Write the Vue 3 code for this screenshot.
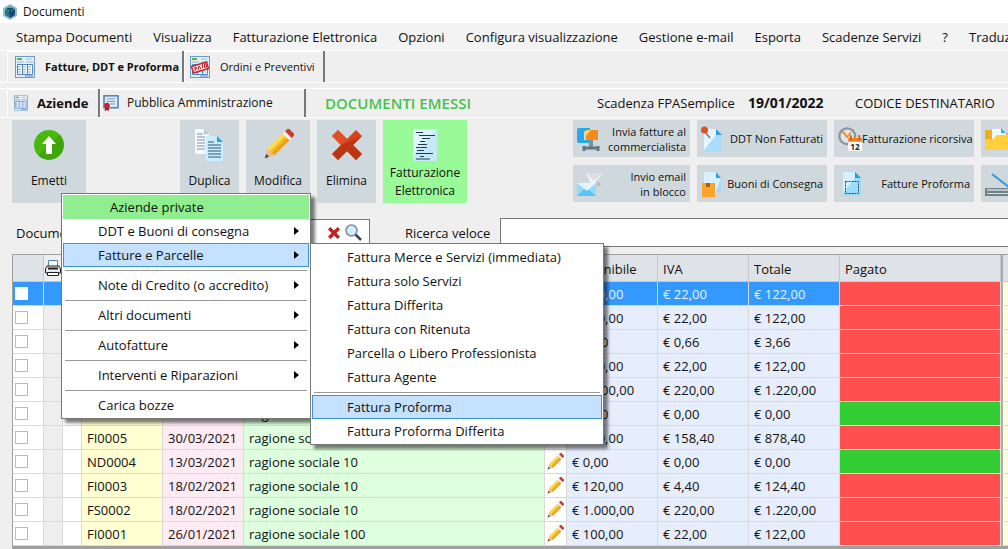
<script setup>
import { ref } from 'vue'

const menuBar = ['Stampa Documenti', 'Visualizza', 'Fatturazione Elettronica', 'Opzioni', 'Configura visualizzazione', 'Gestione e-mail', 'Esporta', 'Scadenze Servizi', '?', 'Traduzioni']

const issueMenu = [
  { label: 'DDT e Buoni di consegna', sub: true },
  { label: 'Fatture e Parcelle', sub: true, active: true },
  { sep: true },
  { label: 'Note di Credito (o accredito)', sub: true },
  { sep: true },
  { label: 'Altri documenti', sub: true },
  { sep: true },
  { label: 'Autofatture', sub: true },
  { sep: true },
  { label: 'Interventi e Riparazioni', sub: true },
  { sep: true },
  { label: 'Carica bozze' },
]

const invoiceMenu = [
  { label: 'Fattura Merce e Servizi (immediata)' },
  { label: 'Fattura solo Servizi' },
  { label: 'Fattura Differita' },
  { label: 'Fattura con Ritenuta' },
  { label: 'Parcella o Libero Professionista' },
  { label: 'Fattura Agente' },
  { sep: true },
  { label: 'Fattura Proforma', active: true },
  { label: 'Fattura Proforma Differita' },
]

const rows = ref([
  { id: 11, no: '', date: '', name: '', net: '€ 100,00', vat: '€ 22,00', total: '€ 122,00', paid: false, selected: true },
  { id: 10, no: '', date: '', name: '', net: '€ 100,00', vat: '€ 22,00', total: '€ 122,00', paid: false },
  { id: 9, no: '', date: '', name: '', net: '€ 3,00', vat: '€ 0,66', total: '€ 3,66', paid: false },
  { id: 8, no: '', date: '', name: '', net: '€ 100,00', vat: '€ 22,00', total: '€ 122,00', paid: false },
  { id: 7, no: '', date: '', name: '', net: '€ 1.000,00', vat: '€ 220,00', total: '€ 1.220,00', paid: false },
  { id: 6, no: '', date: '30/03/2021', name: 'ragione sociale 10', net: '€ 0,00', vat: '€ 0,00', total: '€ 0,00', paid: true },
  { id: 5, no: 'FI0005', date: '30/03/2021', name: 'ragione sociale 10', net: '€ 720,00', vat: '€ 158,40', total: '€ 878,40', paid: false },
  { id: 4, no: 'ND0004', date: '13/03/2021', name: 'ragione sociale 10', net: '€ 0,00', vat: '€ 0,00', total: '€ 0,00', paid: true },
  { id: 3, no: 'FI0003', date: '18/02/2021', name: 'ragione sociale 10', net: '€ 120,00', vat: '€ 4,40', total: '€ 124,40', paid: false },
  { id: 2, no: 'FS0002', date: '18/02/2021', name: 'ragione sociale 10', net: '€ 1.000,00', vat: '€ 220,00', total: '€ 1.220,00', paid: false },
  { id: 1, no: 'FI0001', date: '26/01/2021', name: 'ragione sociale 100', net: '€ 100,00', vat: '€ 22,00', total: '€ 122,00', paid: false },
])
</script>

<template>
  <div class="window">
    <svg class="defs" width="0" height="0" aria-hidden="true">
      <defs>
        <symbol id="sheet" viewBox="0 0 20 22">
          <rect x=".5" y=".5" width="19" height="21" fill="#e4eef8" stroke="#6d9bc9" />
          <path d="M2 3h5" stroke="#52b848" stroke-width="2" />
          <path d="M11 3h6M2 6h7M11 6h7" stroke="#9dbbd8" />
          <path d="M2.500 8.500h15v10h-15zM7.500 8.500v10M12.500 8.500v10" fill="#f7fbff" stroke="#5586bb" />
          <path d="M3 11h14M3 13.500h14M3 16h14" stroke="#8eb3d8" stroke-dasharray="3 2" />
          <path d="M10 20h8" stroke="#5586bb" />
        </symbol>
        <symbol id="pencil" viewBox="0 0 34 34">
          <path d="M3 31l3-10 7 7z" fill="#eebd80" />
          <path d="M3 31l1.500-4.500 3 3z" fill="#3b4048" />
          <path d="M6 21L22 5l7 7-16 16z" fill="#f8bd25" />
          <path d="M6 21L22 5l2.500 2.500L8.500 23.500z" fill="#ffdc55" />
          <path d="M10.500 25.500l16-16L29 12 13 28z" fill="#eba01c" />
          <path d="M22 5l3-3 7 7-3 3z" fill="#f0eef0" />
          <path d="M24.500 2.500L27 0q1-1 2 0l5 5q1 1 0 2l-2.500 2.500z" fill="#c73c2a" />
        </symbol>
        <symbol id="cross" viewBox="0 0 30 30">
          <path d="M6 0l9 9 9-9 6 6-9 9 9 9-6 6-9-9-9 9-6-6 9-9-9-9z" fill="#d8431c" />
          <path d="M30 6l-9 9 9 9-6 6-9-9-9 9-6-6 9-9z" fill="#bd3512" />
          <path d="M6 0L0 6l9 9 6-6z" fill="#e05024" />
        </symbol>
      </defs>
    </svg>

    <header class="title">
      <svg width="14" height="16" viewBox="0 0 14 16" aria-hidden="true">
        <path d="M7 0l7 4v8l-7 4-7-4V4z" fill="#8fc3c6" />
        <path d="M7 2l5 3v6l-5 3-5-3V5z" fill="#2c6f8f" />
        <path d="M7 2l5 3-5 3-5-3z" fill="#55b09c" />
        <path d="M7 8l5-3v6l-5 3z" fill="#174a6d" />
        <path d="M4 5h6M7 5v6" stroke="#1c4d78" stroke-width="2" />
      </svg>
      <span>Documenti</span>
    </header>

    <nav class="menubar">
      <a v-for="item in menuBar" :key="item" href="#">{{ item }}</a>
    </nav>

    <div class="tabs main-tabs" role="tablist">
      <button class="tab current" role="tab" aria-selected="true">
        <svg width="20" height="22"><use href="#sheet" /></svg>
        <span>Fatture, DDT e Proforma</span>
      </button>
      <button class="tab" role="tab" aria-selected="false">
        <svg width="20" height="22" viewBox="0 0 20 22">
          <use href="#sheet" />
          <path d="M1.500 10.500l15-4.500 2 6.500-15 4.500z" fill="#f6e3e3" stroke="#c02b30" stroke-width="1.500" />
          <path d="M5 15v-4l2 1-2 1.500M8 14l1-4 2 3M12.500 12V8M14.500 11.500V7.500q3 .5 2 3.500z" fill="none" stroke="#c02b30" />
        </svg>
        <span>Ordini e Preventivi</span>
      </button>
    </div>

    <div class="tabs sub-tabs">
      <button class="tab current">
        <svg width="14" height="16" viewBox="0 0 20 22"><use href="#sheet" /></svg>
        <span>Aziende</span>
      </button>
      <button class="tab">
        <svg width="16" height="16" viewBox="0 0 16 16">
          <rect x="1" y=".8" width="14" height="12" fill="#dcebf8" stroke="#4d80b8" stroke-width="1.500" />
          <path d="M4 4h8M4 6.500h8M7 9h5" stroke="#6fa0d0" />
          <path d="M2.500 11l-1 5 2.500-1 2 1-.5-5z" fill="#a81a1e" />
          <circle cx="4" cy="10.500" r="2.800" fill="#cf2026" />
        </svg>
        <span>Pubblica Amministrazione</span>
      </button>
      <strong class="issued">DOCUMENTI EMESSI</strong>
      <span class="expiry">Scadenza FPASemplice</span>
      <b class="expiry-date">19/01/2022</b>
      <span class="code">CODICE DESTINATARIO</span>
    </div>

    <div class="toolbar">
      <button class="big emit">
        <svg width="30" height="32" viewBox="0 0 30 32">
          <circle cx="15" cy="16" r="15" fill="#49b80d" />
          <path d="M4.400 26.600A15 15 0 0 0 25.600 5.400z" fill="#3fa50a" />
          <path d="M15 7l7 8h-4v10h-6V15H8z" fill="#fff" />
        </svg>
        <span>Emetti</span>
      </button>
      <button class="big dup">
        <svg width="30" height="32" viewBox="0 0 30 32">
          <path d="M0 0h9l5 5v20H0z" fill="#f5f9fb" />
          <path d="M9 0l5 5H9z" fill="#b9c8d0" />
          <path d="M2 5h6M2 8h8M2 11h8M2 14h8M2 17h8M2 20h8" stroke="#83929c" />
          <path d="M11 7h11l6 6v19H11z" fill="#c9edff" />
          <path d="M22 7l6 6h-6z" fill="#27a3ec" />
          <path d="M13 13h6M13 16h13M13 19h13M13 22h13M13 25h13M13 28h13" stroke="#32566d" />
        </svg>
        <span>Duplica</span>
      </button>
      <button class="big mod">
        <svg width="32" height="32"><use href="#pencil" /></svg>
        <span>Modifica</span>
      </button>
      <button class="big del">
        <svg width="30" height="32"><use href="#cross" /></svg>
        <span>Elimina</span>
      </button>
      <button class="big efatt">
        <svg width="24" height="32" viewBox="0 0 24 32">
          <path d="M0 0h24v32H0z" fill="#c3e9fb" />
          <path d="M0 0h24L0 26z" fill="#def4fe" />
          <path d="M3 3.500h7M6 6.500h16M9 9.500h8M7 12.500h5M5 15.500h9M3 18.500h11M4 21.500h7M3 24.500h17M7 27.500h4M3 30h14" stroke="#253b48" />
        </svg>
        <span>Fatturazione Elettronica</span>
      </button>

      <div class="quick">
        <button class="small">
          <svg width="24" height="26" viewBox="0 0 24 26">
            <path d="M2 2h11v3H7v9h6v3H2q-2 0-2-2V4q0-2 2-2z" fill="#29a9e8" />
            <path d="M9 4h12v10H9z" fill="#f58a1d" />
            <path d="M9 4h5l-5 6z" fill="#ffd34d" />
            <path d="M12 14h4v7h-4z" fill="#78909c" />
            <path d="M7 22h14M7 20v5M21 20v5" stroke="#607783" stroke-width="3" />
          </svg>
          <span>Invia fatture al<br>commercialista</span>
        </button>
        <button class="small">
          <svg width="24" height="26" viewBox="0 0 24 26">
            <path d="M3 3h12l6 6v17H3z" fill="#a9dffc" />
            <path d="M3 3h12v6L3 24z" fill="#e6f6fe" />
            <path d="M15 3l6 6h-6z" fill="#2ba2e8" />
            <path d="M4 6l5 6" stroke="#778" stroke-width="1.500" />
            <circle cx="3.500" cy="4" r="3.500" fill="#dc5424" />
          </svg>
          <span>DDT Non Fatturati</span>
        </button>
        <button class="small">
          <svg width="24" height="26" viewBox="0 0 26 26">
            <circle cx="10" cy="10" r="8.500" fill="#dce6ea" stroke="#8b969c" stroke-width="2.500" />
            <path d="M5 5l5 6 4-5" fill="none" stroke="#ef8c2b" stroke-width="2" />
            <path d="M11 12h15v14H11z" fill="#fff" />
            <path d="M11 12h15v4H11z" fill="#f57b1c" />
            <path d="M14 9v5M23 9v5" stroke="#cf5c12" stroke-width="2" />
            <text x="18.500" y="24.500" font-size="9" font-weight="700" text-anchor="middle" fill="#1d2930">12</text>
          </svg>
          <span>Fatturazione ricorsiva</span>
        </button>
        <button class="small" aria-label="Archivio">
          <svg width="30" height="26" viewBox="0 0 30 26">
            <path d="M0 4h7l3 3h20v17H2q-2 0-2-2z" fill="#f2ab1b" />
            <path d="M7 3h10l4 4v10H7z" fill="#f2faff" />
            <path d="M16 2l5 5h-5z" fill="#37aeee" />
            <path d="M0 13h8l4-4h18v15H2q-2 0-2-2z" fill="#ffcf3c" />
          </svg>
        </button>
        <button class="small">
          <svg width="26" height="26" viewBox="0 0 26 26">
            <path d="M9 2h17L15 15z" fill="#f4f6f7" />
            <path d="M9 2h17l-9 8z" fill="#d9dfe2" />
            <path d="M20 9l4 5-4 2z" fill="#b4bec4" />
            <path d="M0 12h19v13H0z" fill="#8fdcfb" />
            <path d="M0 25l9-9 10 9z" fill="#5bc4f3" />
            <path d="M0 12h19l-9 8z" fill="#e1f6ff" />
          </svg>
          <span>Invio email<br>in blocco</span>
        </button>
        <button class="small">
          <svg width="24" height="26" viewBox="0 0 24 26">
            <path d="M3 1h12l5 6v14H3z" fill="#d8f1fd" />
            <path d="M15 1l5 6h-5z" fill="#2ba2e8" />
            <path d="M20 7v14h-5z" fill="#a3dbf8" />
            <path d="M1 12h13v14H1z" fill="#f9a52b" />
            <path d="M5 12h4v4H5z" fill="#a85b17" />
          </svg>
          <span>Buoni di Consegna</span>
        </button>
        <button class="small">
          <svg width="26" height="26" viewBox="0 0 26 26">
            <path d="M5 1h12l6 6v18H5z" fill="#9bdcfb" />
            <path d="M5 1h12v6L5 22z" fill="#d6f1fe" />
            <path d="M17 1l6 6h-6z" fill="#279cdf" />
            <path d="M7.500 10.500h13v12h-13z" fill="none" stroke="#2b4758" stroke-dasharray="2 1" />
          </svg>
          <span>Fatture Proforma</span>
        </button>
        <button class="small" aria-label="Scanner">
          <svg width="30" height="26" viewBox="0 0 30 26">
            <path d="M7 3l22 17" stroke="#3d9ad9" stroke-width="2" />
            <path d="M0 17h30v8H0z" fill="#71818a" />
            <path d="M2 18h28v2H2z" fill="#b7c3c9" />
            <path d="M2 22.500h28" stroke="#d7dfe3" />
          </svg>
        </button>
      </div>
    </div>

    <div class="search">
      <label for="doc">Documento</label>
      <div class="doc-box">
        <input id="doc" type="text">
        <button aria-label="Cancella"><svg width="12" height="12" viewBox="0 0 30 30"><path d="M6 0l9 9 9-9 6 6-9 9 9 9-6 6-9-9-9 9-6-6 9-9-9-9z" fill="#c4201f" /></svg></button>
        <button aria-label="Cerca">
          <svg width="17" height="17" viewBox="0 0 17 17">
            <path d="M10 10l6 6" stroke="#36424c" stroke-width="2.500" />
            <circle cx="6.500" cy="6.500" r="5.500" fill="#d3ecfb" stroke="#7c8d99" stroke-width="1.500" />
          </svg>
        </button>
      </div>
      <label class="quick-label" for="fast">Ricerca veloce</label>
      <input id="fast" class="fast" type="text">
    </div>

    <main class="grid">
      <table>
        <colgroup>
          <col class="c-check"><col class="c-print"><col class="c-flag"><col class="c-no"><col class="c-date"><col class="c-name"><col class="c-edit"><col class="c-money"><col class="c-money"><col class="c-money"><col><col class="c-last">
        </colgroup>
        <thead>
          <tr>
            <th></th>
            <th class="printer">
              <svg width="16" height="16" viewBox="0 0 16 16">
                <path d="M3.500 6V.5h9V6" fill="#fff" stroke="#4c83ad" />
                <path d="M2 6h12l1.500 3v4H.5V9z" fill="#e7e7e7" stroke="#1d2126" />
                <path d="M3 8.500h10" stroke="#1d2126" stroke-width="2" />
                <path d="M2.500 12.500h11v3h-11z" fill="#fff" stroke="#1d2126" />
              </svg>
            </th>
            <th></th><th></th><th></th><th></th><th></th>
            <th>Imponibile</th><th>IVA</th><th>Totale</th><th>Pagato</th><th class="edge"></th>
          </tr>
        </thead>
        <tbody>
          <tr v-for="row in rows" :key="row.id" :class="{ selected: row.selected }">
            <td class="check"><input type="checkbox" :aria-label="'Seleziona documento ' + row.id"></td>
            <td class="print"></td>
            <td></td>
            <td class="no">{{ row.no }}</td>
            <td class="date">{{ row.date }}</td>
            <td class="name">{{ row.name }}</td>
            <td class="edit"><svg width="18" height="18"><use href="#pencil" /></svg></td>
            <td class="money">{{ row.net }}</td>
            <td class="money">{{ row.vat }}</td>
            <td class="money">{{ row.total }}</td>
            <td :class="row.paid ? 'paid' : 'unpaid'"></td>
            <td class="edge"></td>
          </tr>
        </tbody>
      </table>
    </main>

    <div class="popup issue" role="menu">
      <div class="heading">Aziende private</div>
      <template v-for="(item, i) in issueMenu" :key="i">
        <hr v-if="item.sep">
        <button v-else role="menuitem" :class="{ active: item.active }">
          <span>{{ item.label }}</span>
          <svg v-if="item.sub" width="5" height="8" viewBox="0 0 5 8"><path d="M0 0l5 4-5 4z" /></svg>
        </button>
      </template>
    </div>

    <div class="popup invoices" role="menu">
      <template v-for="(item, i) in invoiceMenu" :key="i">
        <hr v-if="item.sep">
        <button v-else role="menuitem" :class="{ active: item.active }"><span>{{ item.label }}</span></button>
      </template>
    </div>
  </div>
</template>

<style>
body {
  background: #efefef;
  overflow: hidden;
}
</style>

<style scoped>
.window {
  position: relative;
  background: #efefef;
  color: #111;
  font: 13px/18px "Open Sans", "Noto Sans", sans-serif;
  white-space: nowrap;
  overflow: hidden;
}
.window * {
  box-sizing: border-box;
}
.defs {
  position: absolute;
}
button {
  margin: 0;
  padding: 0;
  border: 0;
  background: none;
  color: inherit;
  font: inherit;
}
svg {
  flex: none;
  display: block;
}
.title {
  display: flex;
  align-items: center;
  gap: 6px;
  height: 23px;
  padding-left: 3px;
  background: #fff;
  font-size: 12px;
}
.menubar {
  display: flex;
  align-items: center;
  gap: 21px;
  height: 28px;
  padding-left: 16px;
  border-bottom: 1px solid #fff;
  background: #f3f3f3;
}
.menubar a {
  color: inherit;
  text-decoration: none;
}
.tabs {
  display: flex;
  align-items: stretch;
  padding-left: 7px;
  border-bottom: 1px solid #fff;
}
.main-tabs {
  height: 32px;
}
.sub-tabs {
  height: 30px;
  margin-top: 5px;
  border-top: 1px solid #fff;
  align-items: center;
}
.tab {
  display: flex;
  align-items: center;
  align-self: stretch;
  border-left: 1px solid #fff;
  border-right: 2px solid #777;
  box-shadow: inset 0 1px #fff;
}
.tab.current {
  font-weight: 700;
}
.main-tabs .tab {
  width: 141px;
  padding-left: 5px;
  gap: 10px;
  font-size: 11px;
}
.main-tabs .tab.current {
  width: 177px;
  padding-left: 7px;
}
.sub-tabs .tab {
  width: 206px;
  padding-left: 2px;
  gap: 8px;
  font-size: 12px;
}
.sub-tabs .tab.current {
  width: 93px;
  padding-left: 6px;
  gap: 9px;
  font-size: 13px;
}
.issued {
  width: 272px;
  margin-left: 19px;
  color: #45c34a;
  font-size: 15px;
  font-weight: 600;
}
.expiry {
  width: 151px;
}
.expiry-date {
  width: 107px;
  font-size: 14px;
}
.toolbar {
  display: flex;
  align-items: flex-start;
  gap: 7px;
  padding: 2px 0 0 12px;
}
.big {
  display: flex;
  flex: none;
  flex-direction: column;
  align-items: center;
  width: 59px;
  height: 83px;
  padding-top: 9px;
  gap: 11px;
  background: #cfd8dc;
  font-size: 12px;
}
.emit {
  width: 74px;
  margin-right: 87px;
}
.mod {
  width: 64px;
}
.efatt {
  width: 84px;
  gap: 3px;
  background: #98fb98;
  white-space: normal;
}
.quick {
  display: grid;
  flex: 1 0 auto;
  grid-template-columns: 117px 130px 140px 1fr;
  gap: 8px 7px;
  margin-left: 99px;
}
.small {
  display: flex;
  align-items: center;
  justify-content: space-between;
  height: 37px;
  padding: 0 4px;
  background: #cfd8dc;
  font-size: 11px;
  line-height: 15px;
  text-align: right;
}
.search {
  display: flex;
  align-items: center;
  height: 29px;
  margin-top: 15px;
  padding-left: 16px;
}
.search label {
  width: 84px;
}
.search .quick-label {
  width: 95px;
}
.doc-box {
  display: flex;
  align-items: center;
  gap: 5px;
  width: 270px;
  height: 28px;
  margin-right: 35px;
  padding-right: 7px;
  border: 1px solid #777;
  background: #fff;
}
.search input {
  flex: 1;
  min-width: 0;
  border: 0;
  background: #fff;
}
.search .fast {
  align-self: stretch;
  border: 1px solid #777;
  border-right: 0;
}
.grid {
  margin: 7px 0 0 12px;
  border: 1px solid #a0a0a0;
  border-width: 1px 0 3px 1px;
}
table {
  width: 100%;
  table-layout: fixed;
  border-collapse: separate;
  border-spacing: 0;
  background: #fff;
}
.c-check { width: 31px; }
.c-print { width: 19px; }
.c-flag { width: 19px; }
.c-no, .c-date { width: 81px; }
.c-name { width: 301px; }
.c-edit { width: 22px; }
.c-money { width: 91px; }
.c-last { width: 7px; }
th {
  height: 27px;
  padding: 2px 5px 0;
  border-right: 1px solid #c4c7cb;
  border-bottom: 1px solid #c4c7cb;
  background: #dfe2e7;
  font-weight: 400;
  text-align: left;
}
th.printer {
  padding: 0 1px;
  background: #eee;
}
td {
  height: 24px;
  padding: 0 5px;
  border-right: 1px solid #d9d9d9;
  border-bottom: 1px solid #d9d9d9;
}
.check {
  padding: 0 2px;
}
.check input {
  display: block;
  appearance: none;
  width: 13px;
  height: 13px;
  margin: 0;
  border: 1px solid #bbb;
  background: #fff;
}
.print { background: #eee; }
.no { background: #ffffd2; }
.date { background: #ffebf4; }
.name { background: #deffde; }
.edit { padding: 0 1px; }
.money { background: #e6edfc; }
.unpaid { background: #ff4f4f; }
.paid { background: #32cd32; }
td.unpaid, td.paid { border-color: #ddd; }
td.edge {
  padding: 0;
  border-left: 2px solid #aaa;
  border-right: 0;
  background: #ffffdc;
}
th.edge {
  padding: 0;
  border-left: 2px solid #aaa;
  border-right: 0;
}
.selected td:not(.unpaid, .edge) {
  background: #3399ff;
  color: #e4f3ff;
}
.selected .check input {
  border-color: #fff;
}
.popup {
  position: absolute;
  padding: 1px;
  border: 1px solid #777;
  background: #fff;
  box-shadow: 4px 4px 3px rgba(0, 0, 0, 0.5);
}
.issue {
  top: 193px;
  left: 61px;
  width: 250px;
}
.invoices {
  top: 243px;
  left: 310px;
  width: 294px;
}
.popup button,
.heading {
  display: flex;
  align-items: center;
  justify-content: space-between;
  width: 100%;
  height: 24px;
  padding: 0 9px 0 34px;
  border: 1px solid transparent;
}
.heading {
  padding-left: 46px;
  background: #90ee90;
}
.popup .active {
  border-color: #3d95d8;
  background: #c4e1ff;
}
.popup hr {
  height: 1px;
  margin: 3px 2px 2px;
  border: 0;
  background: #999;
}
</style>
